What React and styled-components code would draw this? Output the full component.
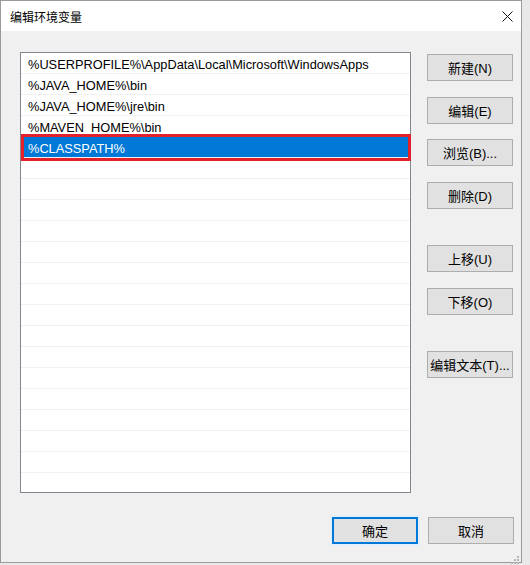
import React from 'react'
import styled, { createGlobalStyle } from 'styled-components'

const GlobalStyle = createGlobalStyle`
  html, body {
    margin: 0;
    padding: 0;
    background: #e9e9e9;
  }
  body {
    font-family: "Liberation Sans", "Noto Sans CJK SC", sans-serif;
  }
`;

const paths = [
  '%USERPROFILE%\\AppData\\Local\\Microsoft\\WindowsApps',
  '%JAVA_HOME%\\bin',
  '%JAVA_HOME%\\jre\\bin',
  '%MAVEN_HOME%\\bin',
  '%CLASSPATH%',
]

const sideButtons = [
  { label: '新建(N)', gap: 0 },
  { label: '编辑(E)', gap: 16 },
  { label: '浏览(B)...', gap: 15 },
  { label: '删除(D)', gap: 16 },
  { label: '上移(U)', gap: 36 },
  { label: '下移(O)', gap: 16 },
  { label: '编辑文本(T)...', gap: 36 },
]

const ROW_COUNT = 20

const App = () => {
  const selected = 4
  const rows = Array.from({ length: ROW_COUNT }, (_, i) => paths[i] || '')

  return (
    <Page>
      <GlobalStyle />
      <Window>
        <TitleBar>
          <Title>编辑环境变量</Title>
          <CloseBox>
            <svg width="11" height="11" viewBox="0 0 11 11">
              <path d="M0.5 0.5 L10.5 10.5 M10.5 0.5 L0.5 10.5" stroke="#111" strokeWidth="1" />
            </svg>
          </CloseBox>
        </TitleBar>
        <Body>
          <Content>
            <ListBox>
              {rows.map((text, i) => (
                <Row key={i} $selected={i === selected}>{text}</Row>
              ))}
            </ListBox>
            <SideColumn>
              {sideButtons.map((b) => (
                <Button key={b.label} $gap={b.gap}>{b.label}</Button>
              ))}
            </SideColumn>
          </Content>
          <Footer>
            <Button $focused>确定</Button>
            <Button>取消</Button>
          </Footer>
        </Body>
        <Grip>
          <svg width="10" height="10" viewBox="0 0 10 10">
            {[[8, 2], [8, 5], [5, 5], [8, 8], [5, 8], [2, 8]].map(([x, y]) => (
              <rect key={`${x}-${y}`} x={x} y={y} width="2" height="2" fill="#b5b5b5" />
            ))}
          </svg>
        </Grip>
      </Window>
    </Page>
  )
}

export default App;

const Page = styled.div`
  width: 530px;
  height: 565px;
  overflow: hidden;
`;

const Window = styled.div`
  position: relative;
  box-sizing: border-box;
  width: 522px;
  height: 563px;
  border: 1px solid #9a9a9a;
  background: #f0f0f0;
  display: flex;
  flex-direction: column;
`;

const TitleBar = styled.div`
  height: 30px;
  flex-shrink: 0;
  background: #fff;
  display: flex;
  align-items: center;
  justify-content: space-between;
  padding: 0 4px 0 9px;
`;

const Title = styled.div`
  font-size: 12px;
  color: #000;
`;

const CloseBox = styled.div`
  width: 20px;
  height: 20px;
  display: flex;
  align-items: center;
  justify-content: center;
`;

const Body = styled.div`
  flex: 1;
  padding: 21px 7px 0 19px;
  display: flex;
  flex-direction: column;
`;

const Content = styled.div`
  display: flex;
  gap: 16px;
`;

const ListBox = styled.div`
  box-sizing: border-box;
  width: 391px;
  height: 441px;
  border: 1px solid #828790;
  background: #fff;
  display: flex;
  flex-direction: column;
`;

const Row = styled.div`
  box-sizing: border-box;
  height: 21px;
  flex-shrink: 0;
  border-bottom: 1px solid #f0f0f0;
  padding-left: ${(p) => (p.$selected ? '4px' : '7px')};
  margin: ${(p) => (p.$selected ? '0 2px 0 3px' : '0')};
  background: ${(p) => (p.$selected ? '#0078d7' : 'transparent')};
  color: ${(p) => (p.$selected ? '#fff' : '#000')};
  outline: ${(p) => (p.$selected ? '3px solid #e2212b' : 'none')};
  font-size: 12.8px;
  line-height: 23px;
  white-space: nowrap;
`;

const SideColumn = styled.div`
  display: flex;
  flex-direction: column;
  padding-top: 2px;
`;

const Button = styled.button`
  box-sizing: border-box;
  width: 86px;
  height: 27px;
  margin-top: ${(p) => p.$gap || 0}px;
  padding: 0;
  border: ${(p) => (p.$focused ? '2px solid #0078d7' : '1px solid #adadad')};
  background: #e1e1e1;
  color: #000;
  font-family: "Liberation Sans", "Noto Sans CJK SC", sans-serif;
  font-size: 13px;
  box-shadow: ${(p) => (p.$focused ? '0 0 0 2px #e3f0fb' : 'none')};
`;

const Footer = styled.div`
  display: flex;
  justify-content: flex-end;
  gap: 10px;
  margin-top: 24px;
`;

const Grip = styled.div`
  position: absolute;
  right: 2px;
  bottom: 2px;
  width: 10px;
  height: 10px;
`;
